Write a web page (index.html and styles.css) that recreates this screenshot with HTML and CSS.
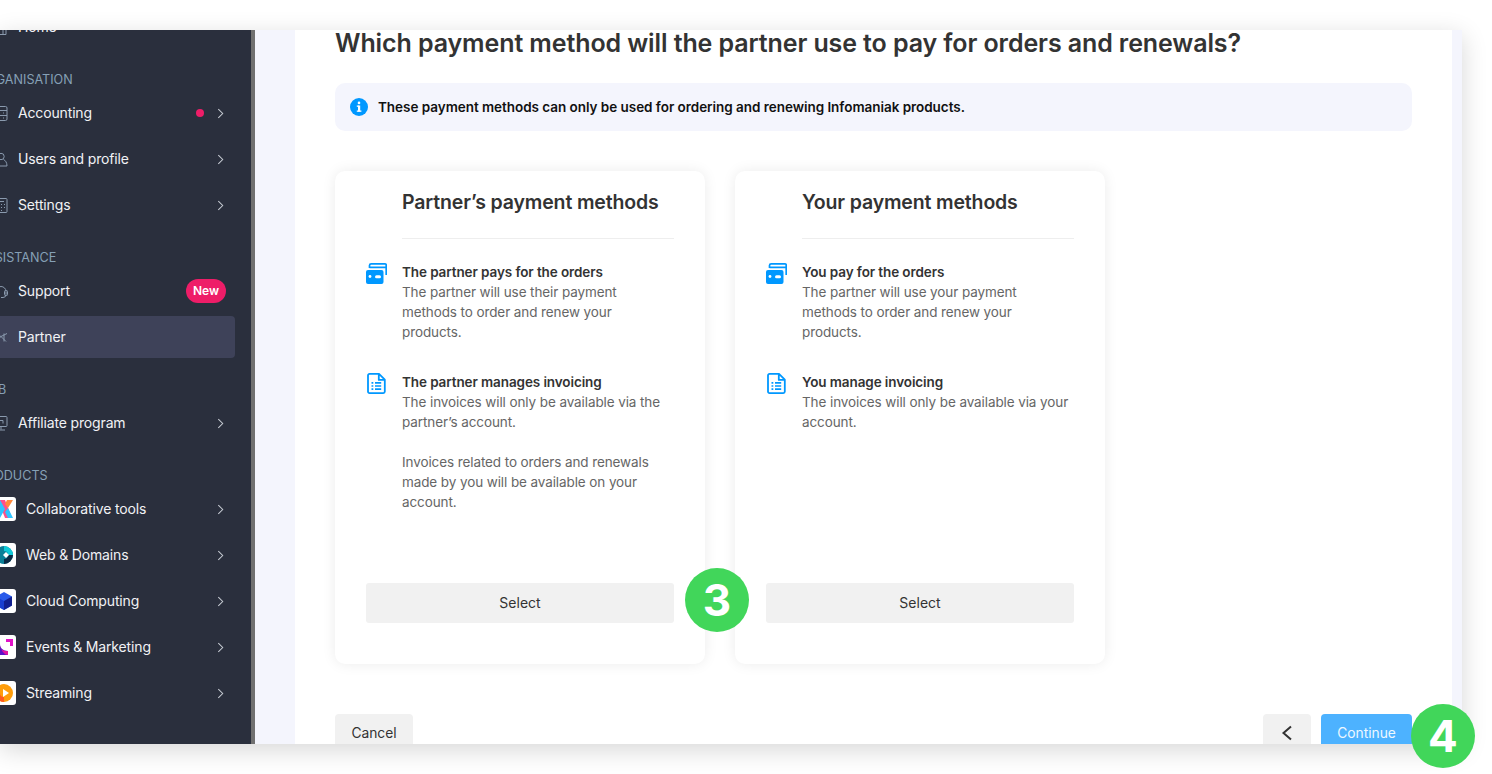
FILE: index.html
```html
<!DOCTYPE html>
<html lang="en">
<head>
<meta charset="utf-8">
<title>Partner payment methods</title>
<link rel="stylesheet" href="styles.css">
</head>
<body>
<div class="window">
  <aside class="sidebar">
    <div class="nav">
      <a class="item home"><svg class="ico" viewBox="0 0 14 16"><path d="M2 7v8h10V7M5 15V9h4v6"/></svg><span class="name">Home</span></a>
      <div class="label">ORGANISATION</div>
      <a class="item"><svg class="ico" viewBox="0 0 14 16"><rect x="1" y="1" width="12" height="14" rx="1.5"/><path d="M1 5h12M1 10h12M4 7.500h1M9 7.500h1M4 12.500h1M9 12.500h1"/></svg><span class="name">Accounting</span><i class="dot"></i><svg class="chev" viewBox="0 0 8 12"><path d="M1.500 1l5 5-5 5"/></svg></a>
      <a class="item"><svg class="ico" viewBox="0 0 14 16"><circle cx="7" cy="5" r="3.200"/><path d="M4.500 8C2.500 9 1 11 1 14.500h12C13 11 11.500 9 9.500 8"/></svg><span class="name">Users and profile</span><svg class="chev" viewBox="0 0 8 12"><path d="M1.500 1l5 5-5 5"/></svg></a>
      <a class="item"><svg class="ico" viewBox="0 0 14 16"><rect x="1" y="1" width="12" height="14" rx="1"/><path d="M4 4h6M4 7h1M7 7h1M10 7h1M4 10h1M7 10h1M10 10h1M4 13h1M7 13h1"/></svg><span class="name">Settings</span><svg class="chev" viewBox="0 0 8 12"><path d="M1.500 1l5 5-5 5"/></svg></a>
      <div class="label">ASSISTANCE</div>
      <a class="item"><svg class="ico" viewBox="0 0 14 16"><path d="M2 8a5 5 0 0 1 10 0v3a3 3 0 0 1-3 3H7"/><rect x="10.500" y="7" width="3" height="5" rx="1"/></svg><span class="name">Support</span><b class="badge">New</b></a>
      <a class="item active"><svg class="ico" viewBox="0 0 14 16"><path d="M1 5l6 3 6-3M2 13l5-5 5 5M10 5v8"/></svg><span class="name">Partner</span></a>
      <div class="label">WEB</div>
      <a class="item"><svg class="ico" viewBox="0 0 14 16"><rect x="1" y="1" width="12" height="10" rx="1"/><path d="M7 11v3M3 14.500h8M5 8V5h4v3"/></svg><span class="name">Affiliate program</span><svg class="chev" viewBox="0 0 8 12"><path d="M1.500 1l5 5-5 5"/></svg></a>
      <div class="label">PRODUCTS</div>
      <a class="item product"><span class="logo"><svg viewBox="0 0 24 24"><path fill="#ff4f8b" d="M6 3h7l7 18h-7z"/><path fill="#2fc4ff" d="M6 21l5-9-5-9z" transform="translate(2 0)"/><path fill="#ff8a3d" d="M15 3h6l-5 8-3-4z"/><path fill="#2fc4ff" d="M13 15l3-4 5 10h-5z"/></svg></span><span class="name">Collaborative tools</span><svg class="chev" viewBox="0 0 8 12"><path d="M1.500 1l5 5-5 5"/></svg></a>
      <a class="item product"><span class="logo"><svg viewBox="0 0 24 24"><circle cx="12" cy="12" r="9" fill="#0a7f97"/><path fill="#0fc9d8" d="M12 3a9 9 0 0 1 9 9h-5a4 4 0 0 0-4-4z"/><path fill="#0b2a44" d="M21 12a9 9 0 0 1-9 9v-5a4 4 0 0 0 4-4z"/><path fill="#fff" d="M14 9l3 3-3 3-3-3z"/></svg></span><span class="name">Web &amp; Domains</span><svg class="chev" viewBox="0 0 8 12"><path d="M1.500 1l5 5-5 5"/></svg></a>
      <a class="item product"><span class="logo"><svg viewBox="0 0 24 24"><path fill="#2a5bea" d="M12 3l8 4.500v9L12 21l-8-4.500v-9z"/><path fill="#12208f" d="M12 12l8-4.500v9L12 21z"/><path fill="#1a3fd0" d="M12 12v9l-8-4.500v-9z"/></svg></span><span class="name">Cloud Computing</span><svg class="chev" viewBox="0 0 8 12"><path d="M1.500 1l5 5-5 5"/></svg></a>
      <a class="item product"><span class="logo"><svg viewBox="0 0 24 24"><path fill="#e112c8" d="M14 4h7v7h-3V7h-4z"/><path fill="#5a12c8" d="M4 20V9h4c0 4 3 7 8 7v4z"/><path fill="#e112a0" d="M8 11c0 3 3 5 8 5v4c-3 0-6-3-8-9z"/></svg></span><span class="name">Events &amp; Marketing</span><svg class="chev" viewBox="0 0 8 12"><path d="M1.500 1l5 5-5 5"/></svg></a>
      <a class="item product"><span class="logo"><svg viewBox="0 0 24 24"><circle cx="12" cy="12" r="9" fill="#ff9d0a"/><path fill="#ff5a1f" d="M12 21a9 9 0 0 1-9-9h5a4 4 0 0 0 4 4z"/><path fill="#fff" d="M11 8l6 4-6 4z"/></svg></span><span class="name">Streaming</span><svg class="chev" viewBox="0 0 8 12"><path d="M1.500 1l5 5-5 5"/></svg></a>
    </div>
  </aside>
  <div class="divider-strip"></div>
  <main class="main">
    <h1 class="title">Which payment method will the partner use to pay for orders and renewals?</h1>
    <div class="notice">
      <svg class="info" viewBox="0 0 18 18"><circle cx="9" cy="9" r="9" fill="#0098ff"/><rect x="8" y="7.500" width="2.200" height="6" fill="#fff"/><rect x="6.800" y="7.500" width="2" height="1.300" fill="#fff"/><rect x="6.800" y="12.500" width="4.600" height="1.300" fill="#fff"/><circle cx="9" cy="4.900" r="1.300" fill="#fff"/></svg>
      <span>These payment methods can only be used for ordering and renewing Infomaniak products.</span>
    </div>
    <div class="cards">
      <section class="card">
        <h2 class="card-title">Partner’s payment methods</h2>
        <div class="feature">
          <svg class="f-ico" viewBox="0 0 21 21"><path fill="none" stroke="#0098ff" stroke-width="1.700" d="M3.500 5V2.500A1.700 1.700 0 0 1 5.200 .9h13.900a1.100 1.100 0 0 1 1.100 1.100V12M3.500 4.300h16.700"/><path fill="#0098ff" d="M2 7h13.500a2 2 0 0 1 2 2v10a2 2 0 0 1-2 2H2a2 2 0 0 1-2-2V9a2 2 0 0 1 2-2z"/><circle cx="4" cy="13.500" r="1.400" fill="#fff"/><rect x="9" y="12.300" width="6" height="3" rx="1.500" fill="#fff"/></svg>
          <div class="f-text"><strong>The partner pays for the orders</strong><p>The partner will use their payment methods to order and renew your products.</p></div>
        </div>
        <div class="feature">
          <svg class="f-ico" viewBox="0 0 21 21"><path fill="none" stroke="#0098ff" stroke-width="1.800" stroke-linejoin="round" d="M3.500 .9h9.500l5.800 5.800v11.900a1.500 1.500 0 0 1-1.500 1.500H3.500A1.500 1.500 0 0 1 2 18.600V2.400A1.500 1.500 0 0 1 3.500 .9zM12.800 1v5.900h6"/><path fill="none" stroke="#0098ff" stroke-width="1.700" d="M5.500 9.800h1.800M9 9.800h6.200M5.500 13h1.800M9 13h6.200M5.500 16.200h1.800M9 16.200h6.200"/></svg>
          <div class="f-text"><strong>The partner manages invoicing</strong><p>The invoices will only be available via the partner’s account.</p><p class="gap">Invoices related to orders and renewals made by you will be available on your account.</p></div>
        </div>
        <button class="select">Select</button>
      </section>
      <section class="card">
        <h2 class="card-title">Your payment methods</h2>
        <div class="feature">
          <svg class="f-ico" viewBox="0 0 21 21"><path fill="none" stroke="#0098ff" stroke-width="1.700" d="M3.500 5V2.500A1.700 1.700 0 0 1 5.200 .9h13.900a1.100 1.100 0 0 1 1.100 1.100V12M3.500 4.300h16.700"/><path fill="#0098ff" d="M2 7h13.500a2 2 0 0 1 2 2v10a2 2 0 0 1-2 2H2a2 2 0 0 1-2-2V9a2 2 0 0 1 2-2z"/><circle cx="4" cy="13.500" r="1.400" fill="#fff"/><rect x="9" y="12.300" width="6" height="3" rx="1.500" fill="#fff"/></svg>
          <div class="f-text"><strong>You pay for the orders</strong><p>The partner will use your payment methods to order and renew your products.</p></div>
        </div>
        <div class="feature">
          <svg class="f-ico" viewBox="0 0 21 21"><path fill="none" stroke="#0098ff" stroke-width="1.800" stroke-linejoin="round" d="M3.500 .9h9.500l5.800 5.800v11.900a1.500 1.500 0 0 1-1.500 1.500H3.500A1.500 1.500 0 0 1 2 18.600V2.400A1.500 1.500 0 0 1 3.500 .9zM12.800 1v5.900h6"/><path fill="none" stroke="#0098ff" stroke-width="1.700" d="M5.500 9.800h1.800M9 9.800h6.200M5.500 13h1.800M9 13h6.200M5.500 16.200h1.800M9 16.200h6.200"/></svg>
          <div class="f-text"><strong>You manage invoicing</strong><p>The invoices will only be available via your account.</p></div>
        </div>
        <button class="select">Select</button>
      </section>
    </div>
    <div class="footer">
      <button class="btn cancel">Cancel</button>
      <button class="btn back"><svg viewBox="0 0 12 16"><path d="M10 1.500L2.500 8l7.500 6.500"/></svg></button>
      <button class="btn continue">Continue</button>
    </div>
  </main>
  <div class="edge"></div>
</div>
<div class="step step-3">3</div>
<div class="step step-4">4</div>
</body>
</html>
```
FILE: styles.css
```css
* { box-sizing: border-box; }
html, body { margin: 0; height: 100%; }
body { background: #fff; font-family: Inter, "Liberation Sans", sans-serif; overflow: hidden; position: relative; }
.window { width: 1462px; height: 714px; margin-top: 30px; display: flex; overflow: hidden; background: #f4f5fd; box-shadow: 0 6px 24px rgba(0,0,0,.16); }
.sidebar { width: 251px; flex: none; background: #2a2f3d; overflow: hidden; }
.nav { display: flex; flex-direction: column; margin: -27px 0 0 -22px; width: 257px; }
.item { display: flex; flex: none; align-items: center; height: 46px; padding: 0 11px 0 18px; color: #f1f2f5; font-size: 14px; letter-spacing: -.15px; }
.ico { width: 14px; height: 17px; margin: 2px 10px 0 -2px; flex: none; fill: none; stroke: #8a9aae; stroke-width: 1; }
.name { flex: 1; }
.chev { width: 7px; height: 11px; fill: none; stroke: #c7ccd4; stroke-width: 1.200; margin: 2px 0 0 13px; }
.label { flex: none; height: 20px; margin-top: 20px; font-size: 12.600px; line-height: 22px; color: #86a0b6; letter-spacing: 0; }
.dot { width: 8px; height: 8px; margin-top: 2px; border-radius: 50%; background: #ee1d68; }
.badge { width: 40px; background: #ee1d68; color: #fff; font-size: 12px; font-weight: 600; height: 24px; line-height: 24px; text-align: center; border-radius: 12px; margin: 2px -2px 0 0; letter-spacing: 0; }
.item.active { background: #3e4259; border-radius: 4px; height: 42px; margin: 3px 0 1px; padding-bottom: 2px; }
.active .ico { margin-top: 0; }
.product { padding-left: 14px; }
.logo { width: 24px; height: 24px; margin: 2px 10px 0 0; background: #fff; border-radius: 3px; flex: none; display: flex; }
.logo svg { width: 24px; height: 24px; }
.divider-strip { width: 4px; flex: none; background: #707070; }
.main { width: 1157px; flex: none; margin-left: 40px; background: #fff; padding: 0 40px; }
.edge { flex: 1; }
.title { margin: 0; font-size: 25px; font-weight: 600; color: #333; line-height: 26px; letter-spacing: -.1px; }
.notice { display: flex; align-items: center; gap: 10px; height: 48px; margin-top: 27px; padding: 0 15px; background: #f4f5fd; border-radius: 10px; color: #111; font-size: 13.500px; font-weight: 600; letter-spacing: -.04px; }
.info { width: 18px; height: 18px; flex: none; }
.cards { display: flex; gap: 30px; margin-top: 40px; }
.card { width: 370px; height: 493px; padding: 0 31px 41px; background: #fff; border-radius: 10px; box-shadow: 0 0 14px rgba(0,0,0,.08); display: flex; flex-direction: column; }
.card-title { height: 68px; margin: 0 0 23px 36px; padding-top: 19px; font-size: 19.500px; font-weight: 600; line-height: 25px; letter-spacing: -.15px; color: #333; border-bottom: 1px solid #eee; }
.feature { display: flex; gap: 15px; margin-bottom: 30px; }
.f-ico { width: 21px; height: 21px; flex: none; margin-top: 1px; }
.f-text { font-size: 13.500px; line-height: 20px; letter-spacing: -.1px; color: #666; }
.f-text strong { display: block; color: #333; font-weight: 600; }
.f-text p { margin: 0; }
.f-text .gap { margin-top: 20px; }
.select { margin-top: auto; height: 40px; padding: 0 0 2px; border: 0; border-radius: 3px; background: #f1f1f1; color: #333; font: 14px Inter, sans-serif; }
.footer { display: flex; gap: 10px; margin-top: 50px; }
.btn { height: 40px; border: 0; border-radius: 4px; font: 13.800px Inter, sans-serif; padding: 0 0 2px; }
.cancel { width: 78px; background: #f1f1f1; color: #333; margin-right: auto; }
.back { width: 48px; background: #f1f1f1; display: flex; align-items: center; justify-content: center; }
.back svg { width: 12px; height: 16px; fill: none; stroke: #333; stroke-width: 2; }
.continue { width: 91px; background: #4db2ff; color: #eef8ff; }
.step { position: absolute; width: 64px; height: 64px; border-radius: 50%; background: #41d65a; color: #fff; font-size: 44px; font-weight: 700; line-height: 64px; text-align: center; }
.step-3 { left: 685px; top: 568px; }
.step-4 { left: 1411px; top: 704px; }
```
